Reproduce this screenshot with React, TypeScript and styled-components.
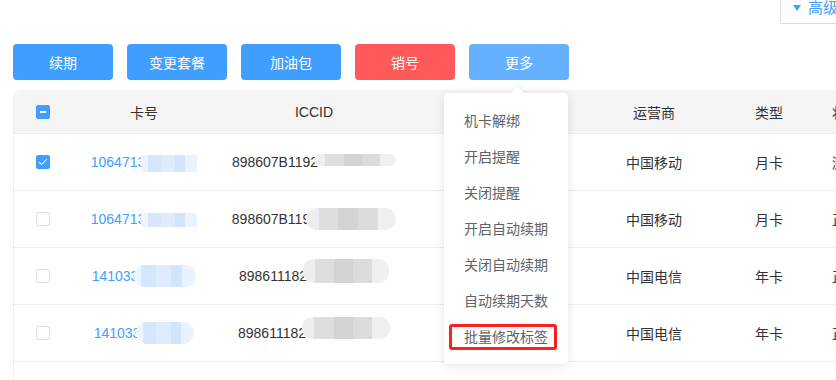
import React from "react";
import styled, { createGlobalStyle, css } from "styled-components";

const GlobalStyle = createGlobalStyle`
  html, body {
    margin: 0;
    padding: 0;
    background: #ffffff;
    overflow: hidden;
  }
  body {
    font-family: "Liberation Sans", "Noto Sans CJK SC", sans-serif;
    font-size: 14px;
    color: #606266;
  }
`;

// #region Layout
const Page = styled.div`
  width: 836px;
  height: 380px;
  position: relative;
  overflow: hidden;
`;

const TopBar = styled.div`
  height: 44px;
  display: flex;
  justify-content: flex-end;
  align-items: flex-start;
`;

const AdvancedButton = styled.div`
  margin-right: -40px;
  margin-top: -10px;
  height: 34px;
  width: 96px;
  box-sizing: border-box;
  border: 1px solid #dcdfe6;
  display: flex;
  align-items: flex-end;
  padding: 0 0 7px 12px;
  gap: 7px;
  color: #409eff;
  font-size: 15px;
  line-height: 17px;
`;

const Caret = styled.span`
  width: 0;
  height: 0;
  border-left: 4px solid transparent;
  border-right: 4px solid transparent;
  border-top: 6px solid #409eff;
  margin-bottom: 5px;
`;

const Toolbar = styled.div`
  display: flex;
  gap: 14px;
  padding-left: 13px;
`;

const ActionButton = styled.button<{ $tone?: "primary" | "danger" | "hover" }>`
  width: 100px;
  height: 36px;
  border: none;
  border-radius: 4px;
  color: #ffffff;
  font-family: "Liberation Sans", "Noto Sans CJK SC", sans-serif;
  font-size: 14px;
  padding: 0;
  cursor: pointer;
  background: ${(p) =>
    p.$tone === "danger" ? "#ff5a5a" : p.$tone === "hover" ? "#66b1ff" : "#409eff"};
`;

const MoreWrap = styled.div`
  position: relative;
`;
// #endregion

// #region Dropdown
const Dropdown = styled.ul`
  position: absolute;
  top: 49px;
  left: -25px;
  width: 124px;
  margin: 0;
  padding: 10px 0 9px;
  list-style: none;
  background: #ffffff;
  border-radius: 4px;
  box-shadow: 0 2px 12px 0 rgba(0, 0, 0, 0.1);
  z-index: 10;

  &::before {
    content: "";
    position: absolute;
    top: -5px;
    left: 69px;
    width: 9px;
    height: 9px;
    background: #ffffff;
    transform: rotate(45deg);
    box-shadow: -2px -2px 4px rgba(0, 0, 0, 0.04);
  }
`;

const DropdownItem = styled.li<{ $marked?: boolean }>`
  position: relative;
  height: 36px;
  line-height: 36px;
  padding-left: 20px;
  color: #606266;
  font-size: 14px;
  white-space: nowrap;

  ${(p) =>
    p.$marked &&
    css`
      &::after {
        content: "";
        position: absolute;
        left: 5px;
        right: 11px;
        top: 5px;
        bottom: 5px;
        border: 3px solid #ff1f1f;
        border-radius: 3px;
      }
    `}
`;
// #endregion

// #region Table
const Table = styled.div`
  margin: 10px 0 0 13px;
  width: 900px;
  border-left: 1px solid #ebeef5;
  border-top-left-radius: 8px;
  overflow: hidden;
`;

const COLS = "56px 148px 192px 181px 126px 104px 50px";

const HeaderRow = styled.div`
  display: grid;
  grid-template-columns: ${COLS};
  height: 43px;
  align-items: center;
  background: #f5f5f5;
  color: #333333;
`;

const BodyRow = styled.div`
  display: grid;
  grid-template-columns: ${COLS};
  height: 57px;
  align-items: center;
  border-top: 1px solid #ebeef5;
  box-sizing: border-box;
  color: #333333;
`;

const Cell = styled.div`
  display: flex;
  justify-content: center;
  align-items: center;
  white-space: nowrap;
`;

const CheckBox = styled.span<{ $state?: "on" | "partial" }>`
  position: relative;
  width: 14px;
  height: 14px;
  box-sizing: border-box;
  border-radius: 2px;
  margin-left: 2px;
  border: 1px solid ${(p) => (p.$state ? "#409eff" : "#dcdfe6")};
  background: ${(p) => (p.$state ? "#409eff" : "#ffffff")};

  ${(p) =>
    p.$state === "partial" &&
    css`
      &::after {
        content: "";
        position: absolute;
        left: 3px;
        right: 3px;
        top: 5px;
        height: 2px;
        background: #ffffff;
      }
    `}

  ${(p) =>
    p.$state === "on" &&
    css`
      &::after {
        content: "";
        position: absolute;
        left: 4px;
        top: 1px;
        width: 3px;
        height: 7px;
        border: 1px solid #ffffff;
        border-left: 0;
        border-top: 0;
        transform: rotate(45deg);
      }
    `}
`;

const CardLink = styled.span`
  color: #409eff;
  display: flex;
  align-items: center;
`;

const Plain = styled.span`
  display: flex;
  align-items: center;
`;

const Smudge = styled.span<{ $tint: "blue" | "grey"; $w: number; $h: number; $dy?: number; $round?: number }>`
  display: inline-block;
  width: ${(p) => p.$w}px;
  height: ${(p) => p.$h}px;
  margin-left: -4px;
  transform: translateY(${(p) => p.$dy ?? 0}px);
  border-radius: ${(p) => p.$round ?? 10}px;
  filter: blur(0.6px);
  background: ${(p) =>
    p.$tint === "blue"
      ? "linear-gradient(90deg, #eef5ff 0 12%, #d6e7fd 12% 35%, #dfecfe 35% 60%, #d2e5fd 60% 78%, #e9f2ff 78%)"
      : "linear-gradient(90deg, #eeeeee 0 14%, #dedede 14% 36%, #d4d4d4 36% 58%, #dcdcdc 58% 80%, #f0f0f0 80%)"};
`;
// #endregion

const menu = ["机卡解绑", "开启提醒", "关闭提醒", "开启自动续期", "关闭自动续期", "自动续期天数", "批量修改标签"];

const rows = [
  { card: "1064713", iccid: "898607B1192", op: "中国移动", kind: "月卡", st: "激活", on: true, cw: 56, ch: 17, cr: 2, iw: 82, ih: 12, idy: -2 },
  { card: "1064713", iccid: "898607B119", op: "中国移动", kind: "月卡", st: "正常", on: false, cw: 56, ch: 14, cr: 2, iw: 90, ih: 22, idy: 0 },
  { card: "141033", iccid: "898611182", op: "中国电信", kind: "年卡", st: "正常", on: false, cw: 62, ch: 22, cr: 10, iw: 86, ih: 24, idy: -5 },
  { card: "141033", iccid: "898611182", op: "中国电信", kind: "年卡", st: "正常", on: false, cw: 58, ch: 22, cr: 11, iw: 88, ih: 22, idy: -5 },
];

export default function App() {
  return (
    <Page>
      <GlobalStyle />
      <TopBar>
        <AdvancedButton>
          <Caret />
          高级
        </AdvancedButton>
      </TopBar>

      <Toolbar>
        <ActionButton>续期</ActionButton>
        <ActionButton>变更套餐</ActionButton>
        <ActionButton>加油包</ActionButton>
        <ActionButton $tone="danger">销号</ActionButton>
        <MoreWrap>
          <ActionButton $tone="hover">更多</ActionButton>
          <Dropdown>
            {menu.map((m, i) => (
              <DropdownItem key={m} $marked={i === menu.length - 1}>
                {m}
              </DropdownItem>
            ))}
          </Dropdown>
        </MoreWrap>
      </Toolbar>

      <Table>
        <HeaderRow>
          <Cell>
            <CheckBox $state="partial" />
          </Cell>
          <Cell>卡号</Cell>
          <Cell>ICCID</Cell>
          <Cell />
          <Cell>运营商</Cell>
          <Cell>类型</Cell>
          <Cell>状态</Cell>
        </HeaderRow>
        {rows.map((r, i) => (
          <BodyRow key={i}>
            <Cell>
              <CheckBox $state={r.on ? "on" : undefined} />
            </Cell>
            <Cell>
              <CardLink>
                {r.card}
                <Smudge $tint="blue" $w={r.cw} $h={r.ch} $dy={i < 2 ? 1 : 0} $round={r.cr} />
              </CardLink>
            </Cell>
            <Cell>
              <Plain>
                {r.iccid}
                <Smudge $tint="grey" $w={r.iw} $h={r.ih} $dy={r.idy} />
              </Plain>
            </Cell>
            <Cell />
            <Cell>{r.op}</Cell>
            <Cell>{r.kind}</Cell>
            <Cell>{r.st}</Cell>
          </BodyRow>
        ))}
        <BodyRow />
      </Table>
    </Page>
  );
}
